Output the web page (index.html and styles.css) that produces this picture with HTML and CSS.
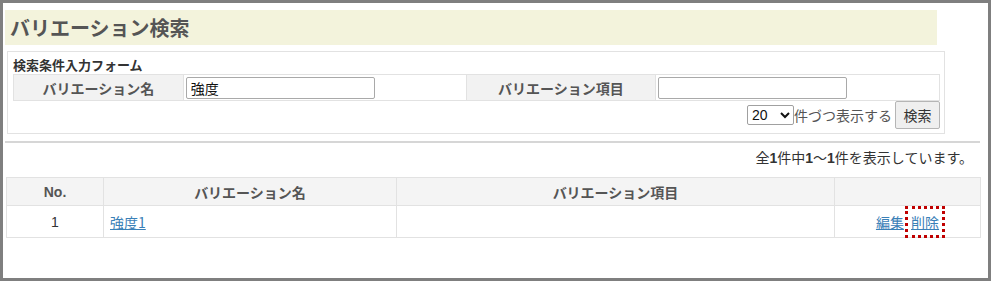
FILE: index.html
```html
<!DOCTYPE html>
<html lang="ja">
<head>
    <meta charset="UTF-8">
    <title>バリエーション検索</title>
    <link rel="stylesheet" href="styles.css">
</head>
<body>
    <div class="frame">
        <div class="page">
            <h1 class="page-title">バリエーション検索</h1>

            <form class="search-box">
                <div class="search-caption">検索条件入力フォーム</div>
                <table class="search-table">
                    <tr>
                        <th class="col-label1">バリエーション名</th>
                        <td class="col-input1"><input type="text" class="text-input" value="強度"></td>
                        <th class="col-label2">バリエーション項目</th>
                        <td class="col-input2"><input type="text" class="text-input" value=""></td>
                    </tr>
                </table>
                <div class="search-actions">
                    <select class="per-page">
                        <option selected>20</option>
                        <option>50</option>
                        <option>100</option>
                    </select>
                    <span class="per-page-label">件づつ表示する</span>
                    <button type="button" class="search-button">検索</button>
                </div>
            </form>

            <hr class="divider">

            <p class="result-count">全<b>1</b>件中<b>1</b>〜<b>1</b>件を表示しています。</p>

            <table class="result-table">
                <thead>
                    <tr>
                        <th class="col-no">No.</th>
                        <th class="col-name">バリエーション名</th>
                        <th class="col-item">バリエーション項目</th>
                        <th class="col-ops"></th>
                    </tr>
                </thead>
                <tbody>
                    <tr>
                        <td class="cell-no">1</td>
                        <td><a href="#" class="link">強度1</a></td>
                        <td></td>
                        <td class="cell-ops"><a href="#" class="link">編集</a> <a href="#" class="link marked">削除</a></td>
                    </tr>
                </tbody>
            </table>
        </div>
    </div>
</body>
</html>
```

FILE: styles.css
```css
* {
    margin: 0;
    padding: 0;
    box-sizing: border-box;
}

body {
    background-color: white;
    color: #333;
    font-family: "Noto Sans CJK JP", "Liberation Sans", sans-serif;
    font-size: 14px;
}

.frame {
    width: 991px;
    height: 281px;
    border: 3px solid #7f7f7f;
    overflow: hidden;
}

.page {
    padding: 7px 8px 0 2px;
}

.page-title {
    width: 932px;
    height: 35px;
    background-color: #f3f3dc;
    color: #555;
    font-size: 20px;
    font-weight: bold;
    line-height: 35px;
    padding-left: 5px;
}

.search-box {
    width: 938px;
    margin: 6px 0 0 2px;
    border: 1px solid #e2e2e2;
    padding: 3px 4px 4px 5px;
}

.search-caption {
    font-weight: bold;
    font-size: 13px;
    line-height: 19px;
    color: #333;
}

.search-table {
    width: 927px;
    border-collapse: collapse;
    border: 1px solid #e2e2e2;
}

.search-table th,
.search-table td {
    height: 26px;
    border: 1px solid #e2e2e2;
    padding: 0;
}

.search-table th {
    background-color: #f2f2f2;
    color: #555;
    font-weight: bold;
    text-align: center;
}

.col-label1 { width: 170px; }
.col-input1 { width: 283px; }
.col-label2 { width: 190px; }
.col-input2 { width: 284px; }

.search-table td {
    padding-left: 2px;
}

.text-input {
    width: 189px;
    height: 22px;
    border: 1px solid #a9a9a9;
    border-radius: 2px;
    padding: 0 4px;
    font-family: "Noto Sans CJK JP", sans-serif;
    font-size: 14px;
    color: #111;
    vertical-align: middle;
}

.search-actions {
    display: flex;
    justify-content: flex-end;
    align-items: center;
    height: 28px;
}

.per-page {
    width: 47px;
    height: 20px;
    font-family: "Liberation Sans", sans-serif;
    font-size: 14px;
    border: 1px solid #a0a0a0;
    border-radius: 2px;
    background-color: white;
    color: #111;
}

.per-page-label {
    color: #555;
    margin-right: 3px;
}

.search-button {
    width: 45px;
    height: 28px;
    background-color: #efefef;
    border: 1px solid #b5b5b5;
    border-radius: 2px;
    color: #333;
    font-family: "Noto Sans CJK JP", sans-serif;
    font-size: 14px;
}

.divider {
    border: none;
    border-top: 2px solid #d6d6d6;
    margin-top: 7px;
}

.result-count {
    text-align: right;
    line-height: 18px;
    margin: 5px 7px 0 0;
}

.result-count b {
    font-family: "Liberation Sans", sans-serif;
    font-weight: bold;
}

.result-table {
    width: 975px;
    margin: 10px 0 0 1px;
    border-collapse: collapse;
}

.result-table th,
.result-table td {
    border: 1px solid #e2e2e2;
}

.result-table th {
    height: 28px;
    background-color: #f4f4f4;
    color: #555;
    font-weight: bold;
    text-align: center;
}

.result-table td {
    height: 32px;
    padding: 0 6px;
}

.col-no { width: 97px; font-family: "Liberation Sans", sans-serif; }
.col-name { width: 293px; }
.col-item { width: 438px; }
.col-ops { width: 146px; }

.cell-no {
    text-align: center;
    font-family: "Liberation Sans", sans-serif;
}

.cell-ops {
    text-align: center;
}

.link {
    color: #3a80b7;
    text-decoration: underline;
}

.marked {
    margin-left: 4px;
    outline: 3px dotted #c00000;
    outline-offset: 3px;
}
```
